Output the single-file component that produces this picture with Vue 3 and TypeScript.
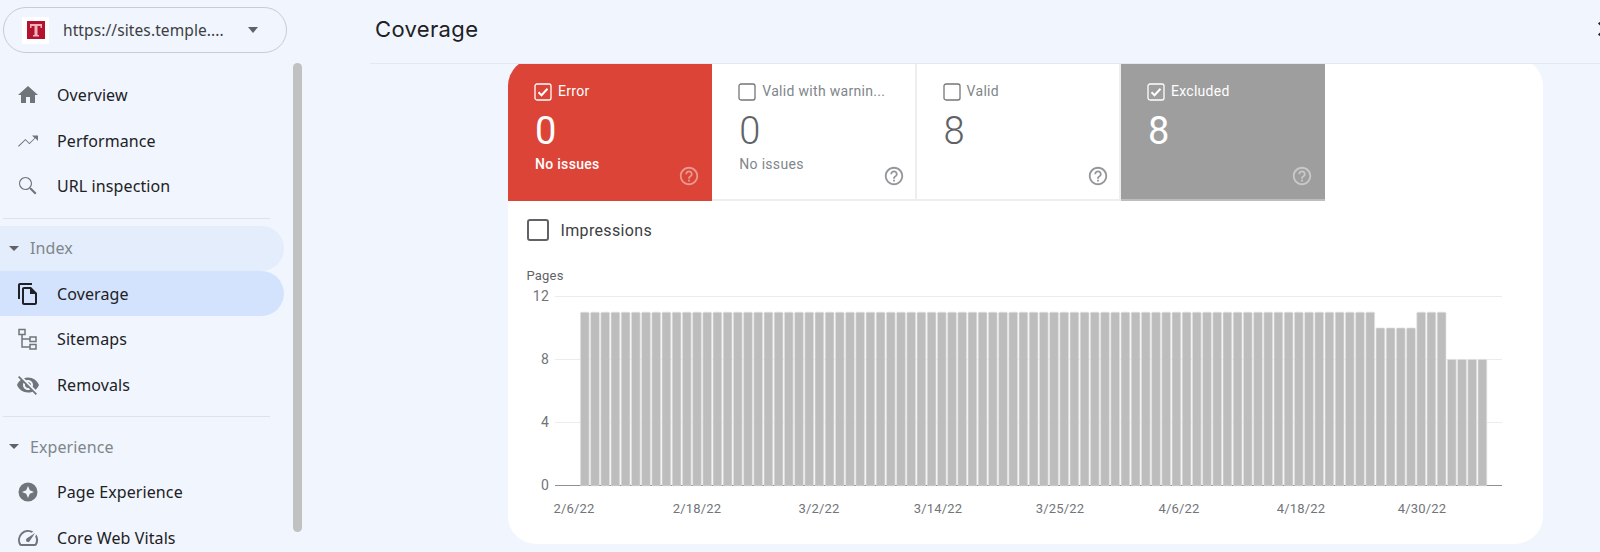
<script setup lang="ts">
interface NavItem { label: string; icon?: string; kind: 'item' | 'group' | 'divider'; tone?: string }
const nav: NavItem[] = [
  { label: 'Overview', icon: 'home', kind: 'item' },
  { label: 'Performance', icon: 'trend', kind: 'item' },
  { label: 'URL inspection', icon: 'search', kind: 'item' },
  { label: '', kind: 'divider' },
  { label: 'Index', kind: 'group', tone: 'soft' },
  { label: 'Coverage', icon: 'copy', kind: 'item', tone: 'active' },
  { label: 'Sitemaps', icon: 'tree', kind: 'item' },
  { label: 'Removals', icon: 'eye', kind: 'item' },
  { label: '', kind: 'divider' },
  { label: 'Experience', kind: 'group' },
  { label: 'Page Experience', icon: 'star', kind: 'item' },
  { label: 'Core Web Vitals', icon: 'gauge', kind: 'item' },
]
const tiles = [
  { label: 'Error', value: '0', sub: 'No issues', checked: true, cls: 'red' },
  { label: 'Valid with warnin...', value: '0', sub: 'No issues', checked: false, cls: '' },
  { label: 'Valid', value: '8', sub: '', checked: false, cls: '' },
  { label: 'Excluded', value: '8', sub: '', checked: true, cls: 'grey' },
]
const values: number[] = [...Array(78).fill(11), 10, 10, 10, 10, 11, 11, 11, 8, 8, 8, 8]
const baseY = 200
const unit = 15.75
const bars = values.map((v, i) => ({ x: 72.4 + i * 10.2, y: baseY - v * unit + 0.4, h: v * unit + 0.4 }))
const yTicks = [12, 8, 4, 0].map((v) => ({ v, y: baseY - v * unit }))
const xTicks = [
  ['2/6/22', 66], ['2/18/22', 189], ['3/2/22', 311], ['3/14/22', 430],
  ['3/25/22', 552], ['4/6/22', 671], ['4/18/22', 793], ['4/30/22', 914],
] as [string, number][]
</script>

<template>
  <div class="page">
    <aside class="side">
      <div class="prop">
        <span class="fav"><svg width="18" height="18" viewBox="0 0 18 18"><rect width="18" height="18" fill="#b5122f"/><path d="M3 3h12v4h-1.500V5H10.500v9H12v1.500H6V14h1.500V5H4.500v2H3z" fill="#eeb5bd"/></svg></span>
        <span class="prop-text">https://sites.temple....</span>
        <span class="caret big"></span>
      </div>
      <nav class="nav">
        <template v-for="(n, i) in nav" :key="i">
          <div v-if="n.kind === 'divider'" class="divider"></div>
          <div v-else-if="n.kind === 'group'" class="row group" :class="n.tone">
            <span class="caret small"></span><span>{{ n.label }}</span>
          </div>
          <div v-else class="row" :class="n.tone">
            <svg class="ico" width="24" height="24" viewBox="0 0 24 24" :fill="n.icon === 'copy' ? '#202124' : '#70757a'">
              <path v-if="n.icon === 'home'" d="M10 20v-6h4v6h5v-8h3L12 3 2 12h3v8z"/>
              <path v-else-if="n.icon === 'trend'" d="M16 6.500l2.600 2.500-5.200 5.100-4-4L2 17l.8.8 6.600-6.500 4 4 6-6L22 12V6.500z"/>
              <path v-else-if="n.icon === 'search'" d="M15.500 14h-.79l-.28-.27C15.410 12.590 16 11.110 16 9.500 16 5.910 13.090 3 9.500 3S3 5.910 3 9.500 5.910 16 9.500 16c1.610 0 3.090-.59 4.230-1.570l.27.28v.79l5 4.990L20.490 19l-4.990-5zm-6 .9C6.900 14.900 4.100 12.100 4.100 9.500S6.900 4.100 9.500 4.100 14.900 6.900 14.900 9.500 12.100 14.900 9.500 14.900z"/>
              <path v-else-if="n.icon === 'copy'" d="M16 1H4c-1.100 0-2 .9-2 2v14h2V3h12V1zm-1 4H8c-1.100 0-1.990.9-1.990 2L6 21c0 1.100.89 2 1.990 2H19c1.100 0 2-.9 2-2V11l-6-6zM8 21V7h6v5h5v9H8z"/>
              <g v-else-if="n.icon === 'tree'" fill="none" stroke="#70757a" stroke-width="1.500">
                <rect x="3" y="2.500" width="6" height="5"/><rect x="14" y="10" width="6" height="4.500"/><rect x="14" y="17.500" width="6" height="4.500"/>
                <path d="M6 7.500v12.500h8M6 12h8"/>
              </g>
              <path v-else-if="n.icon === 'eye'" d="M12 7c2.760 0 5 2.240 5 5 0 .65-.13 1.260-.36 1.830l2.920 2.920c1.510-1.260 2.700-2.890 3.430-4.750-1.730-4.390-6-7.500-11-7.500-1.400 0-2.740.25-3.980.7l2.160 2.160C10.740 7.130 11.350 7 12 7zM2 4.270l2.280 2.280.46.46C3.080 8.300 1.780 10.020 1 12c1.730 4.390 6 7.500 11 7.500 1.550 0 3.030-.3 4.380-.84l.42.42L19.730 22 21 20.730 3.270 3 2 4.270zM7.530 9.800l1.550 1.550c-.05.21-.08.43-.08.65 0 1.660 1.340 3 3 3 .22 0 .44-.03.65-.08l1.550 1.550c-.67.33-1.410.53-2.200.53-2.760 0-5-2.240-5-5 0-.79.2-1.530.53-2.200zm4.310-.78l3.150 3.150.02-.16c0-1.660-1.340-3-3-3l-.17.01z"/>
              <path v-else-if="n.icon === 'star'" fill-rule="evenodd" d="M12 2.500a9.500 9.500 0 1 1 0 19 9.500 9.500 0 0 1 0-19zM12 6l-1.800 4.200L6 12l4.200 1.800L12 18l1.800-4.200L18 12l-4.200-1.800z"/>
              <g v-else-if="n.icon === 'gauge'">
                <path d="M20.380 8.570l-1.230 1.850a8 8 0 0 1-.22 7.580H5.070A8 8 0 0 1 15.580 6.850l1.850-1.230A10 10 0 0 0 3.350 19a2 2 0 0 0 1.720 1h13.850a2 2 0 0 0 1.740-1 10 10 0 0 0-.27-10.440z"/>
                <path d="M10.590 15.410a2 2 0 0 0 2.830 0l5.660-8.490-8.490 5.660a2 2 0 0 0 0 2.830z"/>
              </g>
            </svg>
            <span>{{ n.label }}</span>
          </div>
        </template>
      </nav>
      <div class="scrollbar"></div>
    </aside>

    <main class="main">
      <header class="top">
        <h1>Coverage</h1>
        <svg class="close" width="24" height="24" viewBox="0 0 24 24" fill="#202124"><path d="M19 6.410 17.590 5 12 10.590 6.410 5 5 6.410 10.590 12 5 17.590 6.410 19 12 13.410 17.590 19 19 17.590 13.410 12z"/></svg>
      </header>
      <div class="content">
        <section class="card">
          <div class="tiles">
            <div v-for="t in tiles" :key="t.label" class="tile" :class="t.cls">
              <div class="tile-head">
                <svg width="18" height="18" viewBox="0 0 18 18" class="cb">
                  <rect x="1" y="1" width="16" height="16" rx="2" fill="none" :stroke="t.checked ? '#fff' : '#757575'" stroke-width="1.300"/>
                  <path v-if="t.checked" d="M4.500 9.300l3 3 6-6.500" fill="none" stroke="#fff" stroke-width="2"/>
                </svg>
                <span>{{ t.label }}</span>
              </div>
              <div class="tile-val">{{ t.value }}</div>
              <div class="tile-sub">{{ t.sub }}</div>
              <svg class="help" width="22" height="22" viewBox="0 0 24 24" fill="currentColor"><path d="M11 18h2v-2h-2v2zm1-16C6.480 2 2 6.480 2 12s4.480 10 10 10 10-4.480 10-10S17.520 2 12 2zm0 18c-4.410 0-8-3.590-8-8s3.590-8 8-8 8 3.590 8 8-3.590 8-8 8zm0-14c-2.210 0-4 1.790-4 4h2c0-1.100.9-2 2-2s2 .9 2 2c0 2-3 1.750-3 5h2c0-2.250 3-2.500 3-5 0-2.210-1.790-4-4-4z"/></svg>
            </div>
          </div>
          <div class="impr">
            <span class="impr-box"></span>
            <span>Impressions</span>
          </div>
          <div class="pages">Pages</div>
          <svg class="chart" width="1035" height="240" viewBox="0 0 1035 240">
            <g v-for="t in yTicks" :key="t.v">
              <line x1="47" :x2="994" :y1="t.y + 0.5" :y2="t.y + 0.5" :stroke="t.v === 0 ? '#8f8f8f' : '#ececec'" stroke-width="1"/>
              <text x="41" :y="t.y + 5" text-anchor="end" class="tick big-tick">{{ t.v }}</text>
            </g>
            <rect v-for="(b, i) in bars" :key="i" :x="b.x" :y="b.y" width="8.800" :height="b.h" rx="1.200" fill="#bdbdbd" stroke="#e2e2e2" stroke-width=".7"/>
            <text v-for="t in xTicks" :key="t[0]" :x="t[1]" y="228" text-anchor="middle" class="tick">{{ t[0] }}</text>
          </svg>
        </section>
      </div>
    </main>
  </div>
</template>

<style>
html, body { margin: 0; background: #f1f5fd; }
</style>

<style scoped>
.page {
  display: flex;
  width: 1600px;
  height: 552px;
  overflow: hidden;
  background: #f1f5fd;
  font-family: Roboto, "Liberation Sans", sans-serif;
  color: #202124;
}
.side { position: relative; width: 370px; flex: none; }
.prop {
  display: flex;
  align-items: center;
  box-sizing: border-box;
  width: 284px;
  height: 46px;
  margin: 7px 0 0 3px;
  border: 1px solid #c9cbce;
  border-radius: 23px;
  padding-left: 18px;
}
.fav {
  display: flex;
  align-items: center;
  justify-content: center;
  width: 27px;
  height: 27px;
  background: #fff;
  flex: none;
}
.prop-text { margin-left: 14px; width: 172px; font: 15.500px "Noto Sans", sans-serif; letter-spacing: .1px; color: #3c4043; white-space: nowrap; }
.caret { display: inline-block; width: 0; height: 0; border-style: solid; border-color: #5f6368 transparent transparent; }
.caret.big { margin-left: 13px; border-width: 6px 5.500px 0; }
.caret.small { border-width: 5px 5px 0; margin-right: 11px; margin-left: 9px; }
.nav { margin-top: 19.500px; width: 284px; }
.row {
  display: flex;
  align-items: center;
  height: 45.400px;
  font: 16px "Noto Sans", sans-serif;
  letter-spacing: .1px;
  padding-left: 16px;
  box-sizing: border-box;
  border-radius: 0 23px 23px 0;
}
.row .ico { margin-right: 17px; flex: none; }
.group { padding-left: 0; color: #80868b; }
.soft { background: #e3edfc; }
.active { background: #d3e3fd; }
.divider { height: 1px; width: 267px; margin: 9px 0 7px 3px; background: #e0e2e6; }
.scrollbar {
  position: absolute;
  left: 293px;
  top: 63px;
  width: 9px;
  height: 469px;
  border-radius: 4.500px;
  background: #c1c1c1;
}
.main { display: flex; flex-direction: column; width: 1230px; flex: none; }
.top {
  position: relative;
  z-index: 2;
  display: flex;
  align-items: center;
  justify-content: space-between;
  box-sizing: border-box;
  height: 64px;
  flex: none;
  background: #f1f5fd;
  border-bottom: 1px solid #e6e8ec;
  padding-left: 5px;
}
.top h1 { margin: 0 0 5px; font: 400 22px Inter, "Noto Sans", sans-serif; letter-spacing: .35px; color: #202124; }
.close { margin-right: -17px; margin-bottom: 6px; flex: none; }
.content { flex: 1; padding-left: 138px; min-height: 0; }
.card {
  width: 1035px;
  height: 486px;
  margin-top: -6px;
  background: #fff;
  border-radius: 28px;
  overflow: hidden;
}
.tiles { display: flex; height: 143px; }
.tile {
  position: relative;
  box-sizing: border-box;
  width: 204.300px;
  height: 143px;
  padding: 24px 0 0 27px;
  border-right: 2px solid #eee;
  border-bottom: 2px solid #eee;
  color: #80868b;
  background: #fff;
}
.tile:nth-child(4) { border-right: 0; }
.tile.red { background: #db4437; color: #fff; border-color: #db4437; }
.tile.grey { background: #9e9e9e; color: #fff; border-color: #9e9e9e; border-bottom-color: #bdbdbd; }
.tile-head { display: flex; align-items: center; height: 18px; font-size: 14px; letter-spacing: .3px; gap: 6px; white-space: nowrap; }
.cb { flex: none; margin-left: -1px; margin-top: 2px; }
.tile-val { margin-top: 8px; height: 46px; line-height: 46px; font-size: 38px; font-weight: 300; color: #5f6368; }
.tile.red .tile-val, .tile.grey .tile-val { color: #fff; font-weight: 400; }
.tile-sub { margin-top: 0; font-size: 14px; letter-spacing: .3px; height: 20px; line-height: 20px; }
.tile.red .tile-sub { font-weight: 500; }
.help { position: absolute; right: 10px; bottom: 12px; opacity: .85; }
.tile:nth-child(4) .help { right: 12px; }
.tile .help { color: #80868b; }
.tile.red .help, .tile.grey .help { color: #fff; opacity: .45; }
.impr { display: flex; align-items: center; height: 24px; margin: 17px 0 0 18.500px; font-size: 16px; letter-spacing: .35px; gap: 12px; color: #3c4043; }
.impr-box { box-sizing: border-box; width: 22px; height: 22px; border: 2px solid #5f6368; border-radius: 3px; }
.pages { margin: 26px 0 0 18.500px; font-size: 13px; letter-spacing: .2px; height: 16px; line-height: 16px; color: #5f6368; }
.chart { display: block; margin-top: 1px; }
.tick { font: 13px Roboto, sans-serif; fill: #70757a; letter-spacing: .2px; }
.big-tick { font-size: 14px; }
</style>
